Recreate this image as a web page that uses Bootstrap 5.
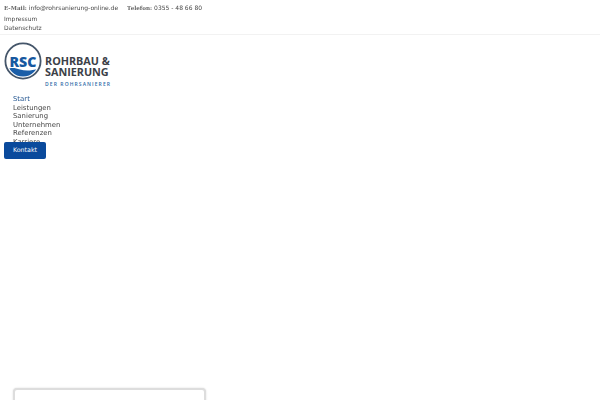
<!DOCTYPE html>
<html lang="de">
<head>
<meta charset="utf-8">
<title>RSC</title>
<link rel="stylesheet" href="https://cdn.jsdelivr.net/npm/bootstrap@5.3.0/dist/css/bootstrap.min.css">
<style>
html,body{height:400px;overflow:hidden;background:#fff}
body{font-family:"DejaVu Sans",sans-serif;color:#484848;font-size:6px;position:relative}
.topbar{height:35px;border-bottom:1px solid #f2f2f2;padding:3px 4px 0;will-change:transform}
.contact-line{height:10px;line-height:10px;white-space:nowrap}
.contact-line b{font-family:"DejaVu Serif",serif;font-size:5.600px;color:#666}
.contact-line a,.meta-link{color:#484848;text-decoration:none}
.contact-line span+span{margin-left:9px}
.meta-list{margin-top:1px}
.meta-link{display:block;height:9px;line-height:9px}
.logo-box{margin:7px 0 0 4px;height:45px;overflow:visible}
.logo-box svg{overflow:visible}
.main-menu{margin:8px 0 0 13px;height:50px;overflow:visible;font-size:6.900px;line-height:8.500px;will-change:transform}
.main-menu a{display:block;color:#484848;text-decoration:none}
.main-menu a.current{color:#22548f}
.cta{position:absolute;left:4px;top:142px;width:42px;height:17px;line-height:16px;padding:0;font-size:6.300px;background:#0a4a9c;border:0;border-radius:2px;color:#fff}
.cookie-box{position:absolute;left:13px;top:388px;width:193px;height:30px;background:#fff;border:2px solid #ddd;border-radius:4px;box-shadow:0 0 2px rgba(0,0,0,.15)}
</style>
</head>
<body>
<div class="topbar">
  <div class="contact-line"><span><b>E-Mail:</b> <a href="#">info@rohrsanierung-online.de</a></span><span><b>Telefon:</b> 0355 - 48 66 80</span></div>
  <div class="meta-list"><a class="meta-link" href="#">Impressum</a><a class="meta-link" href="#">Datenschutz</a></div>
</div>
<div class="logo-box">
<svg width="108" height="45" viewBox="0 0 108 45" role="img" aria-label="RSC Rohrbau und Sanierung">
  <defs><clipPath id="disc"><circle cx="19" cy="19" r="15.5"/></clipPath></defs>
  <circle cx="19" cy="19" r="17.6" fill="#fff" stroke="#45566a" stroke-width="1.8"/>
  <g clip-path="url(#disc)">
    <path d="M2 28c5-3 9-2 14-.5s11 1.500 20-1V36H2z" fill="#1a5ea8"/>
  </g>
  <text x="19" y="25" text-anchor="middle" font-family="Open Sans" font-weight="800" font-size="13.500" fill="#17589f" textLength="27" lengthAdjust="spacingAndGlyphs">RSC</text>
  <text font-family="Open Sans" font-weight="700" font-size="10.800" fill="#3c4148"><tspan x="41" y="22.500">ROHRBAU &amp;</tspan><tspan x="41" y="33.500">SANIERUNG</tspan></text>
  <text x="41" y="43.500" font-family="Open Sans" font-weight="600" font-size="5" fill="#2e6aa8" textLength="65">DER ROHRSANIERER</text>
</svg>
</div>
<nav class="main-menu">
  <a class="current" href="#">Start</a>
  <a href="#">Leistungen</a>
  <a href="#">Sanierung</a>
  <a href="#">Unternehmen</a>
  <a href="#">Referenzen</a>
  <a href="#">Karriere</a>
</nav>
<a class="btn btn-primary cta" href="#">Kontakt</a>
<div class="cookie-box"></div>
<script src="https://cdn.jsdelivr.net/npm/bootstrap@5.3.0/dist/js/bootstrap.bundle.min.js"></script>
</body>
</html>
